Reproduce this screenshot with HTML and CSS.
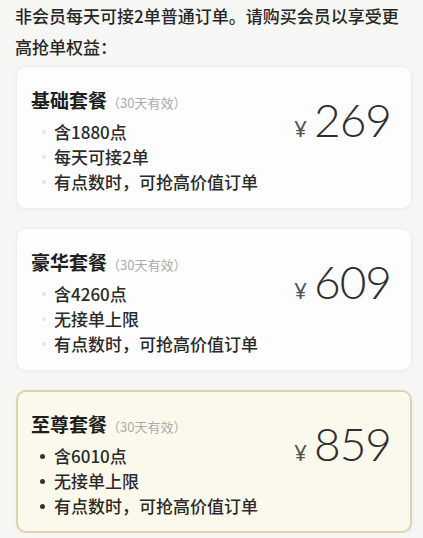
FILE: index.html
```html
<!DOCTYPE html>
<html lang="zh-CN">

<head>
    <meta charset="UTF-8">
    <title>会员套餐</title>
    <link rel="stylesheet" href="styles.css">
</head>

<body>
    <p class="intro">非会员每天可接2单普通订单。请购买会员以享受更高抢单权益：</p>

    <div class="plans">
        <div class="plan">
            <div class="info">
                <h3 class="name">基础套餐<span class="term">（30天有效）</span></h3>
                <ul class="perks">
                    <li>含1880点</li>
                    <li>每天可接2单</li>
                    <li>有点数时，可抢高价值订单</li>
                </ul>
            </div>
            <div class="price"><span class="yen">¥</span>269</div>
        </div>

        <div class="plan">
            <div class="info">
                <h3 class="name">豪华套餐<span class="term">（30天有效）</span></h3>
                <ul class="perks">
                    <li>含4260点</li>
                    <li>无接单上限</li>
                    <li>有点数时，可抢高价值订单</li>
                </ul>
            </div>
            <div class="price"><span class="yen">¥</span>609</div>
        </div>

        <div class="plan selected">
            <div class="info">
                <h3 class="name">至尊套餐<span class="term">（30天有效）</span></h3>
                <ul class="perks">
                    <li>含6010点</li>
                    <li>无接单上限</li>
                    <li>有点数时，可抢高价值订单</li>
                </ul>
            </div>
            <div class="price"><span class="yen">¥</span>859</div>
        </div>
    </div>
</body>

</html>
```

FILE: styles.css
```css
body {
    margin: 0;
    background: #f6f6f4;
    color: #262626;
    font-family: "Noto Sans CJK SC", "Noto Sans", sans-serif;
}

.intro {
    margin: 0;
    padding: 0 22px 0 15px;
    font-size: 17px;
    line-height: 31px;
    font-weight: 500;
}

.plans {
    display: flex;
    flex-direction: column;
    gap: 19px;
    padding: 4px 11px 0 16px;
}

.plan {
    display: flex;
    justify-content: space-between;
    align-items: flex-start;
    height: 143px;
    box-sizing: border-box;
    padding: 21px 20px 0 14px;
    background: #fdfdfd;
    border: 1px solid #ededeb;
    border-radius: 10px;
    box-shadow: 0 1px 4px rgba(0, 0, 0, 0.04);
}

.plan.selected {
    background: #fbf9eb;
    border: 2px solid #d9d5b4;
    padding: 20px 19px 0 13px;
}

.name {
    margin: 0;
    font-size: 19px;
    line-height: 24px;
    font-weight: 700;
    color: #1e1e1e;
}

.term {
    font-size: 13px;
    font-weight: 400;
    color: #ababab;
}

.perks {
    list-style-type: none;
    margin: 4px 0 0;
    padding: 0 0 0 23px;
}

.perks li {
    position: relative;
    font-size: 17px;
    line-height: 25px;
    font-weight: 500;
    color: #2a2a2a;
}

.perks li::before {
    content: "";
    position: absolute;
    left: -12px;
    top: 11px;
    width: 4px;
    height: 4px;
    border-radius: 50%;
    background: #e6e6e6;
}

.selected .perks li::before {
    left: -14px;
    width: 5px;
    height: 5px;
    background: #333;
}

.price {
    margin-top: 7px;
    font-family: "Lato", "Noto Sans", sans-serif;
    font-weight: 300;
    font-size: 46px;
    line-height: 50px;
    letter-spacing: -1px;
    color: #2e2e2e;
}

.yen {
    margin-right: 8px;
    font-family: "Noto Sans", sans-serif;
    font-size: 22px;
    font-weight: 400;
    color: #555;
}
```
